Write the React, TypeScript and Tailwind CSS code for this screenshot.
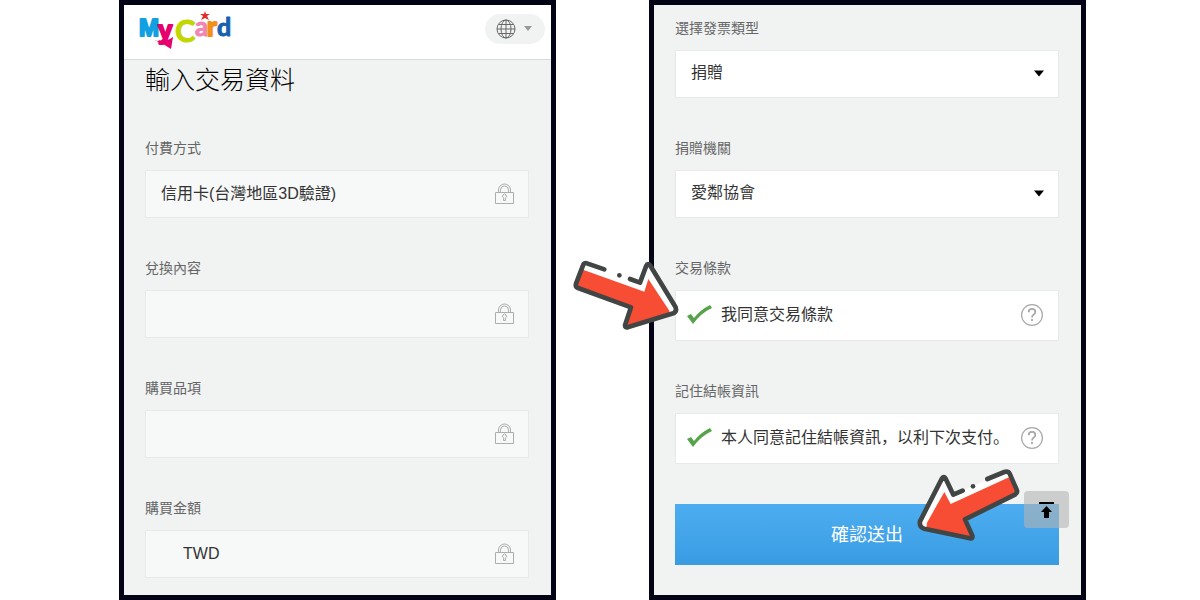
import React, { useState } from 'react';

interface LockedFieldProps {
  id: string;
  label: string;
  value: string;
  indent?: boolean;
}

interface SelectFieldProps {
  id: string;
  label: string;
  options: string[];
}

interface AgreeFieldProps {
  id: string;
  title: string;
  text: string;
  children?: React.ReactNode;
}

const lockedFields: LockedFieldProps[] = [
  { id: 'payment', label: '付費方式', value: '信用卡(台灣地區3D驗證)' },
  { id: 'content', label: '兌換內容', value: '' },
  { id: 'item', label: '購買品項', value: '' },
  { id: 'amount', label: '購買金額', value: 'TWD', indent: true },
];

function Logo() {
  return (
    <svg width="96" height="42" viewBox="0 0 96 42" role="img" aria-label="MyCard">
      <g fontWeight="bold" strokeLinejoin="round">
        <path d="M16 29 Q25 33 35 26 L33 38 L25 33 Z" fill="#e5006e" />
        <text x="1" y="25" fontSize="24" fontFamily="Liberation Sans Narrow, Liberation Sans" fill="#12a0e2" stroke="#12a0e2" strokeWidth="2">M</text>
        <text x="20" y="28" fontSize="26" fontFamily="Liberation Sans" fill="#e5006e" stroke="#e5006e" strokeWidth="2">y</text>
        <text x="37" y="31" fontSize="31" fontFamily="Lato" fill="#c3d600" stroke="#c3d600">C</text>
        <text x="57" y="25" fontSize="26" fontFamily="Lato" fill="#ef86b5" stroke="#ef86b5">a</text>
        <text x="69" y="25" fontSize="26" fontFamily="Lato" fill="#f39019" stroke="#f39019" strokeWidth="2">r</text>
        <text x="79" y="25" fontSize="25" fontFamily="Lato" fill="#1560b0" stroke="#1560b0">d</text>
      </g>
      <path d="M67 0 L68 3 L72 3 L69 5 L71 9 L67 7 L63 9 L65 5 L62 3 L66 3 Z" fill="#e02b2b" />
    </svg>
  );
}

function GlobeIcon() {
  return (
    <svg width="20" height="20" viewBox="0 0 20 20" fill="none" stroke="#686868" aria-hidden="true">
      <circle cx="10" cy="10" r="9" />
      <ellipse cx="10" cy="10" rx="5" ry="9" />
      <path d="M10 1 V19 M1 10 H19 M3 5.5 H17 M3 14.5 H17" />
    </svg>
  );
}

function LockIcon() {
  return (
    <svg width="21" height="22" viewBox="0 0 21 22" fill="none" stroke="#adadad" aria-hidden="true">
      <path d="M1.5 9.5 H19.5 V20.5 H1.5 Z" />
      <path d="M4.5 9.5 V7 A6 6 0 0 1 16.5 7 V9.5 M6.5 9.5 V7 A4 4 0 0 1 14.5 7 V9.5" />
      <path d="M9.7 15 A2 2 0 1 1 11.3 15 L11.5 17.5 H9.5 Z" />
    </svg>
  );
}

function LockedField({ id, label, value, indent }: LockedFieldProps) {
  return (
    <div>
      <label htmlFor={id} className="mb-3 block text-sm text-[#666]">{label}</label>
      <div className="flex h-12 items-center border border-[#e8eaea] bg-[#f7f8f8] pr-[13px]">
        <input
          id={id}
          readOnly
          defaultValue={value}
          className={`min-w-0 flex-1 bg-transparent text-base text-[#333] outline-none ${
            indent ? 'pl-[37px]' : 'pl-[15px]'
          }`}
        />
        <LockIcon />
      </div>
    </div>
  );
}

function SelectField({ id, label, options }: SelectFieldProps) {
  return (
    <div>
      <label htmlFor={id} className="mb-3 block text-sm text-[#666]">{label}</label>
      <div className="relative">
        <select
          id={id}
          className="block h-12 w-full appearance-none border border-[#e8eaea] bg-white pr-10 pb-[2px] pl-[15px] text-base text-[#333] outline-none"
        >
          {options.map((option) => (
            <option key={option}>{option}</option>
          ))}
        </select>
        <svg className="pointer-events-none absolute top-5 right-[15px]" width="10" height="7" viewBox="0 0 10 7" aria-hidden="true">
          <path d="M0 0.5 H10 L5 6.5 Z" />
        </svg>
      </div>
    </div>
  );
}

function AgreeField({ id, title, text, children }: AgreeFieldProps) {
  const [checked, setChecked] = useState(true);

  return (
    <div>
      <p className="mb-3 text-sm text-[#666]">{title}</p>
      <div className="relative flex h-[51px] items-center border border-[#e8eaea] bg-white pr-[15px] pb-[2px] pl-[11px]">
        <label htmlFor={id} className="relative flex flex-1 items-center text-base whitespace-nowrap text-[#333]">
          <input
            id={id}
            type="checkbox"
            checked={checked}
            onChange={() => setChecked(!checked)}
            className="mr-[9px] h-5 w-[25px] appearance-none"
          />
          {checked && (
            <svg className="absolute left-0" width="25" height="20" viewBox="0 0 25 20" aria-hidden="true">
              <path d="M0 11 L4 9 L7 13 Q13 5 23 0 L25 3 Q14 8 6 19 Z" fill="#57a34b" />
            </svg>
          )}
          {text}
        </label>
        <button type="button" aria-label={`${title}說明`}>
          <svg width="22" height="22" viewBox="0 0 22 22" fill="none" stroke="#a8a8a8" aria-hidden="true">
            <circle cx="11" cy="11" r="10.4" strokeWidth="1.2" />
            <path d="M7.7 8.2 C7.7 3.8 14.3 3.8 14.3 8.2 C14.3 10.4 11 10.4 11 13.4 M11 15 V17" strokeWidth="1.8" />
          </svg>
        </button>
        {children}
      </div>
    </div>
  );
}

function ArrowRight() {
  return (
    <svg
      className="pointer-events-none absolute -top-[41px] -left-[111px] z-10"
      width="160"
      height="100"
      viewBox="0 0 480 300"
      strokeLinejoin="round"
      strokeLinecap="round"
      aria-hidden="true"
    >
      <path d="M62 38 L225 98 L248 42 L333 172 Q336 184 323 188 L182 232 L198 172 L32 112 L54 46 Z" fill="#fff" />
      <path d="M54 59 L238 125 L250 87 L313 182 L313 190 L182 232 L198 172 L32 112 Z" fill="#f64d34" />
      <path
        d="M118 58 L66 40 Q57 37 54 46 L33 101 Q30 110 39 114 L198 172 L180 226 Q180 235 190 231 L325 190 Q336 185 332 172 L256 47 Q248 38 244 47 L225 98 L195 87"
        fill="none"
        stroke="#414544"
        strokeWidth="14"
      />
      <circle cx="163" cy="76" r="7" fill="#414544" />
    </svg>
  );
}

function ArrowLeft() {
  return (
    <svg
      className="pointer-events-none absolute -top-11 right-1 z-10"
      width="150"
      height="90"
      viewBox="0 0 450 270"
      strokeLinejoin="round"
      strokeLinecap="round"
      aria-hidden="true"
    >
      <path d="M304 34 L145 104 L117 51 L44 185 Q42 202 58 206 L202 235 L180 178 L338 99 L312 42 Z" fill="#fff" />
      <path d="M312 52 L137 132 L118 96 L66 188 L64 206 L202 235 L180 178 L338 99 Z" fill="#f64d34" />
      <path
        d="M247 57 L298 36 Q309 32 314 41 L335 89 Q339 98 330 104 L180 178 L202 227 Q204 237 195 235 L58 206 Q42 202 45 184 L111 55 Q117 47 122 56 L145 104 L173 92"
        fill="none"
        stroke="#414544"
        strokeWidth="14"
      />
      <circle cx="204" cy="79" r="7" fill="#414544" />
    </svg>
  );
}

function App() {
  return (
    <main className="grid min-h-screen grid-cols-2 gap-[93px] bg-white pr-[114px] pl-[119px] font-['Liberation_Sans','Noto_Sans_CJK_SC',sans-serif]">
      <section className="border-[5px] border-[#020416] bg-[#f1f3f3] pb-[17px]">
        <header className="flex h-[55px] items-center justify-between border-b border-[#d9dbdb] bg-white pr-[6px] pl-[14px]">
          <Logo />
          <button
            type="button"
            aria-label="語言"
            className="mb-[7px] flex h-[30px] w-[60px] items-center gap-2 rounded-full bg-[#f1f3f3] pl-[11px]"
          >
            <GlobeIcon />
            <svg width="8" height="5" viewBox="0 0 8 5" aria-hidden="true">
              <path d="M0 0 H8 L4 5 Z" fill="#999" />
            </svg>
          </button>
        </header>
        <div className="flex flex-col gap-10 pr-[22px] pl-[21px]">
          <h1 className="pt-[2px] text-[25px] leading-9 font-light text-black">輸入交易資料</h1>
          {lockedFields.map((field) => (
            <LockedField key={field.id} {...field} />
          ))}
        </div>
      </section>

      <section className="flex flex-col gap-10 border-[5px] border-[#020416] bg-[#f1f3f3] pt-[13px] pr-[22px] pl-[21px]">
        <SelectField id="invoice" label="選擇發票類型" options={['捐贈']} />
        <SelectField id="charity" label="捐贈機關" options={['愛鄰協會']} />
        <AgreeField id="terms" title="交易條款" text="我同意交易條款">
          <ArrowRight />
        </AgreeField>
        <AgreeField id="remember" title="記住結帳資訊" text="本人同意記住結帳資訊，以利下次支付。" />
        <div className="relative">
          <button type="submit" className="h-[61px] w-full bg-linear-to-b from-[#4dadf0] to-[#399ce3] text-lg text-white">
            確認送出
          </button>
          <ArrowLeft />
          <button
            type="button"
            aria-label="回到頂端"
            className="absolute -top-[13px] -right-[10px] flex h-[37px] w-[45px] items-center justify-center rounded-sm bg-[#b4b4b4]/60"
          >
            <svg width="15" height="16" viewBox="0 0 15 16" aria-hidden="true">
              <path d="M0 0 H15 V2 H0 Z M7.5 4 L13 10 H10 V16 H5 V10 H2 Z" />
            </svg>
          </button>
        </div>
      </section>
    </main>
  );
}

export default App;
